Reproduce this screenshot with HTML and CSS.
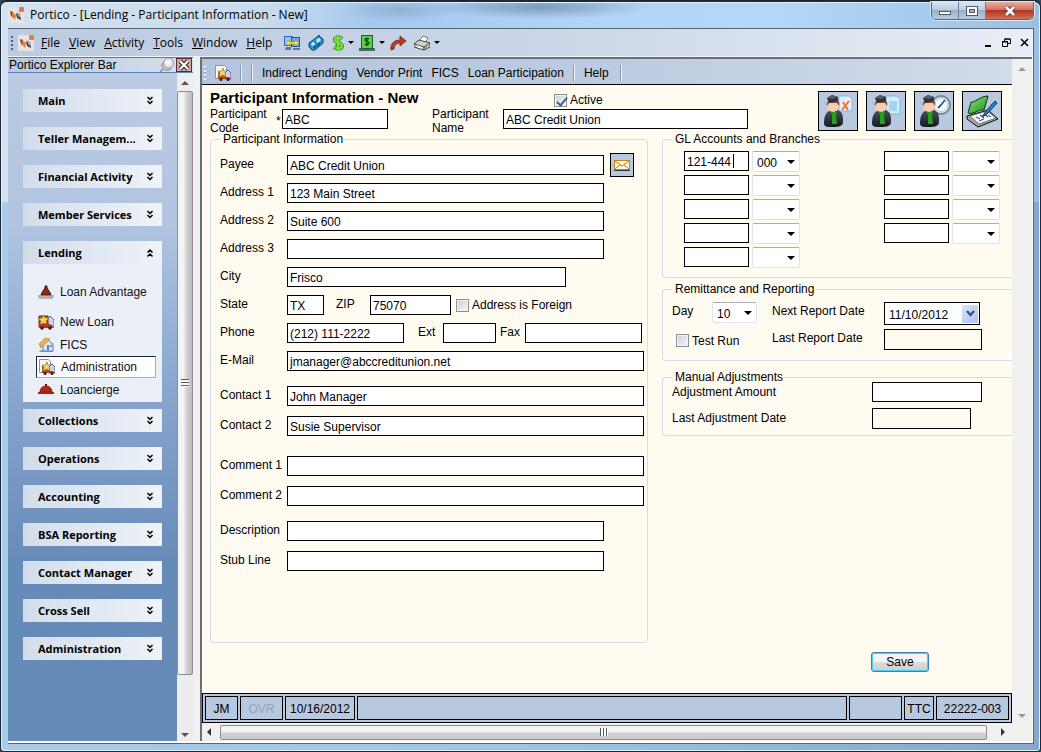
FILE: index.html
```html
<!DOCTYPE html>
<html lang="en">
<head>
<meta charset="utf-8">
<title>Portico - [Lending - Participant Information - New]</title>
<link rel="stylesheet" href="styles.css">
</head>
<body>
<svg class="defs" aria-hidden="true">
  <defs>
    <linearGradient id="suit" x1="0" y1="0" x2="0" y2="1"><stop offset="0" stop-color="#4a505c"/><stop offset="1" stop-color="#14181f"/></linearGradient>
    <linearGradient id="leaf" x1="0" y1="0" x2="1" y2="1"><stop offset="0" stop-color="#8be070"/><stop offset="1" stop-color="#1a9420"/></linearGradient>
    <symbol id="logo" viewBox="0 0 16 16">
      <rect width="16" height="16" fill="#e6e3e3"/>
      <path d="M2 4l3 1 1 6-3-2z" fill="#5a4a4c"/><path d="M4 5l4 3-1 5-3-4z" fill="#ea7a2e"/><path d="M8 6l4 2 1 5-4-2z" fill="#3c3a48"/><path d="M9 5l4 2-2 4z" fill="#b9a9a4"/>
      <rect x="11" y="0" width="5" height="5" fill="#ee8836"/><path d="M12 1l3 3M15 1l-3 3" stroke="#cf6526"/>
    </symbol>
    <symbol id="person" viewBox="0 0 36 36">
      <path d="M4 30c0-7 2-11 7-13h7c5 2 5 7 5 12 0 4-4 5-10 5S4 34 4 30z" fill="url(#suit)"/>
      <path d="M11 19h6l-1 3 1 9h-5l0-9z" fill="#25a01c"/>
      <circle cx="13" cy="13" r="6" fill="#f6cdb2"/>
      <path d="M7 13c-1-4 2-6 5-6h3c4 0 5 3 4 6l-2-3h-8z" fill="#8a4a2a"/>
      <path d="M7 5l5-3 6 2v4l-9 2z" fill="#2d323d"/><path d="M7 5l5-3 6 2-5 2z" fill="#565e6d"/>
    </symbol>
    <symbol id="house" viewBox="0 0 16 16">
      <path d="M1 15c1-3 4-3 7-2h7v2z" fill="#7fb774"/><path d="M5 7l5-4 5 4v7H5z" fill="#dbe3fa" stroke="#6478bb"/>
      <path d="M1 7l6-6 5 1-7 7-2-1v3z" fill="#e5b554" stroke="#a87926" stroke-width=".6"/><rect x="9" y="8" width="2" height="5" fill="#6577b9"/><rect x="12" y="8" width="2" height="2" fill="#5e8be0"/>
    </symbol>
    <symbol id="loan" viewBox="0 0 16 16">
      <path d="M9 5l3-3 4 4v7H9z" fill="#ccd3f4" stroke="#5a62a8"/><path d="M1 2h9v8H1z" fill="#96683a" stroke="#54351f"/>
      <path d="M6 1l1 3 4 0-3 3 1 4-3-2-4 2 1-4-3-2 4-1z" fill="#ffd453" stroke="#a86a17" stroke-width=".7"/>
      <path d="M0 11l3-1h9l3 2v2H1z" fill="#b93623"/><circle cx="4" cy="14" r="1.800" fill="#31201f"/><circle cx="12" cy="14" r="1.800" fill="#31201f"/>
    </symbol>
    <symbol id="admin" viewBox="0 0 16 16">
      <path d="M.5.500h9l2 2v11h-11z" fill="#f4f8fe" stroke="#7d97b6"/><path d="M10 8l3-3 3 3v6h-6z" fill="#ccd3f4" stroke="#5a62a8"/>
      <path d="M3 6h7v6H3z" fill="#96683a"/><path d="M8 3l1 3h3l-2 2 1 4-3-2-4 2 1-4-2-2 4 0z" fill="#ffd453" stroke="#a86a17" stroke-width=".7"/>
      <path d="M3 12h10l3 1v1H3z" fill="#b93623"/><circle cx="6" cy="14.500" r="1.500" fill="#31201f"/><circle cx="13" cy="14.500" r="1.500" fill="#31201f"/>
    </symbol>
    <symbol id="down" viewBox="0 0 8 10"><path d="M1.500 1L4 3.500 6.500 1M1.500 5L4 7.500 6.500 5" fill="none" stroke="#000" stroke-width="1.500"/></symbol>
    <symbol id="up" viewBox="0 0 8 10"><path d="M1.500 4.500L4 2l2.500 2.500M1.500 8.500L4 6l2.500 2.500" fill="none" stroke="#000" stroke-width="1.500"/></symbol>
  </defs>
</svg>

<div class="window">
  <header class="titlebar">
    <svg class="icon"><use href="#logo"/></svg>
    <span class="window-title">Portico - [Lending - Participant Information - New]</span>
    <div class="window-buttons">
      <button class="win-btn" aria-label="Minimize"><svg width="14" height="12" viewBox="0 0 14 12"><rect x="1.500" y="6.500" width="11" height="3" fill="#fff" stroke="#525968"/></svg></button>
      <button class="win-btn" aria-label="Restore"><svg width="14" height="12" viewBox="0 0 14 12"><rect x="1.500" y="1.500" width="11" height="9" fill="#fff" stroke="#525968"/><rect x="4.500" y="4.500" width="5" height="3" fill="#9fb0c4" stroke="#525968"/></svg></button>
      <button class="win-btn close" aria-label="Close"><svg width="14" height="12" viewBox="0 0 14 12"><path d="M3 2l8 8M11 2l-8 8" stroke="#5b3a42" stroke-width="4.500"/><path d="M3 2l8 8M11 2l-8 8" stroke="#fff" stroke-width="2.600"/></svg></button>
    </div>
  </header>

  <div class="client">
    <nav class="menubar">
      <span class="grip"></span>
      <svg class="icon"><use href="#logo"/></svg>
      <div class="menus">
        <button><u>F</u>ile</button><button><u>V</u>iew</button><button><u>A</u>ctivity</button><button><u>T</u>ools</button><button><u>W</u>indow</button><button><u>H</u>elp</button>
      </div>
      <div class="tools">
        <button aria-label="Network"><svg class="icon" viewBox="0 0 16 16"><rect x=".5" y="1.500" width="8" height="9" fill="#8cc4ff" stroke="#3568b0"/><rect x="7.500" y="2.500" width="8" height="9" fill="#6da5ec" stroke="#2c5594"/><path d="M2 12h5v3H1zM9 13h7v2H9z" fill="#5d74a8"/><path d="M2 8l3-3v2h6V5l4 3-4 3V9H5v2z" fill="#ffe824" stroke="#a58a00" stroke-width=".5"/></svg></button>
        <button aria-label="Calculator"><svg class="icon" viewBox="0 0 16 16"><path d="M1 8l8-6 2-2 1 2 3 2v4l-8 7H4L1 12z" fill="#2596d6" stroke="#0c3f68"/><path d="M8 5l3-2 2 2-3 3z" fill="#cbeeff"/><circle cx="5" cy="9" r="1.700" fill="#f3dfe0"/><path d="M6 13l2-2M9 11l3-3" stroke="#093b65" stroke-width="1.500"/></svg></button>
        <button class="drop" aria-label="Currency"><svg class="icon slim" viewBox="0 0 12 16"><path d="M10 4C8 2 3 2 3 5s7 3 7 6-5 3-8 1M6 0v16" fill="none" stroke="#287d17" stroke-width="4"/><path d="M10 4C8 2 3 2 3 5s7 3 7 6-5 3-8 1M6 0v16" fill="none" stroke="#79dc3c" stroke-width="2.600"/></svg></button>
        <button class="drop" aria-label="Cash"><svg class="icon" viewBox="0 0 16 16"><path d="M0 13h2l1-1h10l1 1h2v3H0z" fill="#5b6269"/><rect x="2.500" y=".5" width="11" height="13" fill="#5bce4a" stroke="#255e25"/><path d="M10 4c-1-1-4-1-4 1s4 1 4 3-3 2-4 1M8 3v8" fill="none" stroke="#0b3e10" stroke-width="1.200"/></svg></button>
        <button aria-label="Forward"><svg class="icon" viewBox="0 0 16 16"><path d="M1 15C0 8 5 5 10 5V1l6 5-6 5V8C6 8 4 11 4 14z" fill="#b93c1b" stroke="#7c210b" stroke-width=".8"/></svg></button>
        <button class="drop" aria-label="Print"><svg class="icon" viewBox="0 0 16 16"><path d="M5 6l4-5 5 2-3 5z" fill="#fff" stroke="#777"/><path d="M0 9l5-4 11 3v4l-6 3-10-3z" fill="#d0d0cd" stroke="#444"/><path d="M0 9l10 3 6-4M10 12v3" fill="none" stroke="#444"/><path d="M3 11l5 2" stroke="#fff" stroke-width="1.500"/><circle cx="12" cy="12" r="1" fill="#5ba539"/></svg></button>
      </div>
      <div class="mdi">
        <button aria-label="Minimize document"><svg width="9" height="9" viewBox="0 0 9 9"><path d="M1 7h6v2H1z"/></svg></button>
        <button aria-label="Restore document"><svg width="9" height="9" viewBox="0 0 9 9"><path d="M2.500 3V1h6v4.500H6M3 1h5" fill="none" stroke="#000"/><path d="M.5 3.500h5v5h-5zM0 4h6" fill="none" stroke="#000"/></svg></button>
        <button aria-label="Close document"><svg width="9" height="9" viewBox="0 0 9 9"><path d="M1 1l7 7M8 1L1 8" stroke="#000" stroke-width="1.600"/></svg></button>
      </div>
    </nav>

    <div class="workspace">
      <aside class="explorer">
        <div class="explorer-caption">
          <span>Portico Explorer Bar</span>
          <button aria-label="Pin"><svg class="icon" viewBox="0 0 16 16"><path d="M1 15l5-5" stroke="#888" stroke-width="1.500"/><path d="M3 7c1-1 3-1 4 0l5 4c0 2-4 3-6 2s-4-4-3-6z" fill="#c6c6c6" stroke="#8c8c8c"/><circle cx="9.500" cy="6" r="5" fill="#e8e8e8" stroke="#989898"/><circle cx="9" cy="5" r="2" fill="#fff"/></svg></button>
          <button class="explorer-close" aria-label="Close explorer"><svg width="12" height="12" viewBox="0 0 12 12"><path d="M2 2l8 8M10 2l-8 8" stroke="#222" stroke-width="4.500"/><path d="M2 2l8 8M10 2l-8 8" stroke="#fff" stroke-width="2.400"/></svg></button>
        </div>
        <div class="explorer-body">
          <div class="groups">
            <button class="group-head">Main<svg><use href="#down"/></svg></button>
            <button class="group-head">Teller Managem...<svg><use href="#down"/></svg></button>
            <button class="group-head">Financial Activity<svg><use href="#down"/></svg></button>
            <button class="group-head">Member Services<svg><use href="#down"/></svg></button>
            <section class="group-open">
              <button class="group-head">Lending<svg><use href="#up"/></svg></button>
              <a class="item first" href="#"><svg class="icon" viewBox="0 0 16 16"><path d="M3 11c1-3 2-4 4-7V2h2v2c2 3 3 4 4 7z" fill="#9c2515" stroke="#471009"/><path d="M0 12h16M1 14h14" stroke="#777"/></svg>Loan Advantage</a>
              <a class="item" href="#"><svg class="icon"><use href="#loan"/></svg>New Loan</a>
              <a class="item" href="#"><svg class="icon"><use href="#house"/></svg>FICS</a>
              <a class="item selected" href="#"><svg class="icon"><use href="#admin"/></svg>Administration</a>
              <a class="item" href="#"><svg class="icon" viewBox="0 0 16 16"><path d="M2 10c0-4 3-6 6-6s6 2 6 6z" fill="#ad2b12" stroke="#8d2210"/><path d="M0 11h16" stroke="#9c2612" stroke-width="2"/><path d="M7 2h2v2H7z" fill="#701709"/></svg>Loancierge</a>
            </section>
            <button class="group-head">Collections<svg><use href="#down"/></svg></button>
            <button class="group-head">Operations<svg><use href="#down"/></svg></button>
            <button class="group-head">Accounting<svg><use href="#down"/></svg></button>
            <button class="group-head">BSA Reporting<svg><use href="#down"/></svg></button>
            <button class="group-head">Contact Manager<svg><use href="#down"/></svg></button>
            <button class="group-head">Cross Sell<svg><use href="#down"/></svg></button>
            <button class="group-head">Administration<svg><use href="#down"/></svg></button>
          </div>
          <div class="vscroll side-scroll"><i class="arrow up"></i><div class="thumb"><i class="ridges"></i></div><i class="arrow down"></i></div>
        </div>
      </aside>

      <main class="document">
        <div class="doc-row">
          <div class="doc-column">
            <nav class="doc-toolbar">
              <span class="grip light"></span>
              <button aria-label="Lending administration"><svg class="icon"><use href="#admin"/></svg></button>
              <i class="sep"></i><i class="sep"></i>
              <button>Indirect Lending</button><button>Vendor Print</button><button>FICS</button><button>Loan Participation</button>
              <i class="sep"></i><button>Help</button><i class="sep last"></i>
            </nav>

            <form class="form">
              <header class="form-head">
                <div class="head-fields">
                  <div class="head-line">
                    <h1>Participant Information - New</h1>
                    <label class="check"><input type="checkbox" checked>Active</label>
                  </div>
                  <div class="head-line">
                    <label class="code-label" for="code">Participant Code</label>
                    <span class="required">*</span>
                    <input class="text w-code" id="code" value="ABC">
                    <label class="name-label" for="name">Participant Name</label>
                    <input class="text w-name" id="name" value="ABC Credit Union">
                  </div>
                </div>
                <div class="actions">
                  <button type="button" class="action" aria-label="Remove participant"><svg viewBox="0 0 36 36"><path d="M19 3h10l3 3v12H19z" fill="#e3eefc" stroke="#8db5e5"/><path d="M22 17l7-9M23 9l5 8" stroke="#e87a2c" stroke-width="2"/><use href="#person" width="36" height="36"/></svg></button>
                  <button type="button" class="action" aria-label="Participant document"><svg viewBox="0 0 36 36"><path d="M18 3h11l3 3v15H18z" fill="#d3ebfc" stroke="#7db9e8"/><path d="M21 8h8v10h-8z" fill="#a7d2f2"/><use href="#person" width="36" height="36"/></svg></button>
                  <button type="button" class="action" aria-label="Participant history"><svg viewBox="0 0 36 36"><circle cx="25" cy="12" r="9" fill="#d9e9f2" stroke="#788895" stroke-width="2"/><circle cx="25" cy="12" r="6.500" fill="#fafdff" stroke="#a9d0e4"/><path d="M22 15l3-3 4-5" stroke="#1d5f7c" stroke-width="1.800" fill="none"/><use href="#person" width="36" height="36"/></svg></button>
                  <button type="button" class="action" aria-label="Ledger"><svg viewBox="0 0 36 36"><path d="M3 23l21-6 10 9-20 8-11-8z" fill="#9fa69f" stroke="#111"/><path d="M6 23l17-5 9 7-17 6z" fill="#fff" stroke="#333" stroke-width=".6"/><path d="M4 20L7 9c4 1 9-6 17-6l-4 14c-6-1-10 5-16 3z" fill="url(#leaf)" stroke="#0a3310"/><path d="M12 24l4 2M16 22l4 3M20 21l4 3M15 28l5-2M24 22l3 2" stroke="#4256a4" stroke-width="1.200"/><path d="M18 24l4-6 9-10 2 2-10 11z" fill="#2c83d1" stroke="#0d2c54"/></svg></button>
                </div>
              </header>

              <div class="columns">
                <fieldset class="participant">
                  <legend>Participant Information</legend>
                  <div class="rows">
                    <div class="row"><label for="payee">Payee</label><input class="text w-medium" id="payee" value="ABC Credit Union"><button type="button" class="mail" aria-label="Mail"><svg width="16" height="12" viewBox="0 0 16 12"><rect x=".5" y="1.500" width="15" height="9" fill="#fff8e4" stroke="#c98a12"/><path d="M1 2l7 5 7-5M1 10l5-4M15 10l-5-4" fill="none" stroke="#bd7c13"/><path d="M0 11.500h16" stroke="#333"/></svg></button></div>
                    <div class="row"><label for="a1">Address 1</label><input class="text w-medium" id="a1" value="123 Main Street"></div>
                    <div class="row"><label for="a2">Address 2</label><input class="text w-medium" id="a2" value="Suite 600"></div>
                    <div class="row"><label for="a3">Address 3</label><input class="text w-medium" id="a3"></div>
                    <div class="row"><label for="city">City</label><input class="text w-city" id="city" value="Frisco"></div>
                    <div class="row"><label for="state">State</label><input class="text w-state" id="state" value="TX"><label class="zip" for="zip">ZIP</label><input class="text w-zip" id="zip" value="75070"><label class="check foreign"><input type="checkbox">Address is Foreign</label></div>
                    <div class="row"><label for="phone">Phone</label><input class="text w-phone" id="phone" value="(212) 111-2222"><label class="ext" for="ext">Ext</label><input class="text w-ext" id="ext"><label class="fax" for="fax">Fax</label><input class="text w-phone" id="fax"></div>
                    <div class="row"><label for="email">E-Mail</label><input class="text w-long" id="email" value="jmanager@abccreditunion.net"></div>
                  </div>
                  <div class="rows loose">
                    <div class="row"><label for="c1">Contact 1</label><input class="text w-long" id="c1" value="John Manager"></div>
                    <div class="row"><label for="c2">Contact 2</label><input class="text w-long" id="c2" value="Susie Supervisor"></div>
                  </div>
                  <div class="rows loose comments">
                    <div class="row"><label for="m1">Comment 1</label><input class="text w-long" id="m1"></div>
                    <div class="row"><label for="m2">Comment 2</label><input class="text w-long" id="m2"></div>
                  </div>
                  <div class="rows loose">
                    <div class="row"><label for="desc">Description</label><input class="text w-medium" id="desc"></div>
                    <div class="row"><label for="stub">Stub Line</label><input class="text w-medium" id="stub"></div>
                  </div>
                </fieldset>

                <div class="side">
                  <fieldset class="side-set">
                    <legend>GL Accounts and Branches</legend>
                    <div class="gl">
                      <div class="gl-col">
                        <div class="gl-row"><span class="caret"><input class="text w-gl" aria-label="GL account 1" value="121-444"></span><span class="select"><select aria-label="Branch 1"><option>000</option></select></span></div>
                        <div class="gl-row"><input class="text w-gl" aria-label="GL account 2"><span class="select"><select aria-label="Branch 2"><option></option></select></span></div>
                        <div class="gl-row"><input class="text w-gl" aria-label="GL account 3"><span class="select"><select aria-label="Branch 3"><option></option></select></span></div>
                        <div class="gl-row"><input class="text w-gl" aria-label="GL account 4"><span class="select"><select aria-label="Branch 4"><option></option></select></span></div>
                        <div class="gl-row"><input class="text w-gl" aria-label="GL account 5"><span class="select"><select aria-label="Branch 5"><option></option></select></span></div>
                      </div>
                      <div class="gl-col">
                        <div class="gl-row"><input class="text w-gl" aria-label="GL account 6"><span class="select"><select aria-label="Branch 6"><option></option></select></span></div>
                        <div class="gl-row"><input class="text w-gl" aria-label="GL account 7"><span class="select"><select aria-label="Branch 7"><option></option></select></span></div>
                        <div class="gl-row"><input class="text w-gl" aria-label="GL account 8"><span class="select"><select aria-label="Branch 8"><option></option></select></span></div>
                        <div class="gl-row"><input class="text w-gl" aria-label="GL account 9"><span class="select"><select aria-label="Branch 9"><option></option></select></span></div>
                      </div>
                    </div>
                  </fieldset>

                  <fieldset class="side-set">
                    <legend>Remittance and Reporting</legend>
                    <div class="report">
                      <label for="day">Day</label>
                      <span class="select day"><select id="day"><option>10</option></select></span>
                      <label for="next">Next Report Date</label>
                      <span class="date"><input id="next" value="11/10/2012"><button type="button" aria-label="Open calendar"><svg width="9" height="8" viewBox="0 0 9 8"><path d="M1 1l3.500 4L8 1" fill="none" stroke="#45536e" stroke-width="2.400"/></svg></button></span>
                      <label class="check test"><input type="checkbox">Test Run</label>
                      <label for="last">Last Report Date</label>
                      <input class="text readonly w-last" id="last" readonly>
                    </div>
                  </fieldset>

                  <fieldset class="side-set manual">
                    <legend>Manual Adjustments</legend>
                    <div class="adjust">
                      <label for="amount">Adjustment Amount</label><input class="text w-amount" id="amount">
                      <label for="adate">Last Adjustment Date</label><input class="text readonly w-adate" id="adate" readonly>
                    </div>
                  </fieldset>
                </div>
              </div>
              <footer class="form-foot"><button type="button" class="save">Save</button></footer>
            </form>

            <footer class="status">
              <span class="cell c-user">JM</span><span class="cell c-ovr">OVR</span><span class="cell c-date">10/16/2012</span><span class="cell grow"></span><span class="cell c-blank"></span><span class="cell c-ttc">TTC</span><span class="cell c-num">22222-003</span>
            </footer>
          </div>
          <div class="vscroll doc-scroll"><i class="arrow up"></i><i class="arrow down"></i></div>
        </div>
        <div class="hscroll"><i class="arrow left"></i><div class="hthumb"><i class="ridges upright"></i></div><i class="arrow right"></i></div>
      </main>
    </div>
  </div>
</div>
</body>
</html>
```
FILE: styles.css
```css
* { box-sizing: border-box; }
html, body { height: 100%; }
body { margin: 0; background: #34475c; font: 12px/14px "Liberation Sans", Arial, sans-serif; color: #000; }
button, input, select { font: inherit; color: inherit; }
button { padding: 0; border: 0; background: none; display: flex; align-items: center; }
svg { display: block; flex: none; }
.defs { position: absolute; width: 0; height: 0; }
.icon { width: 16px; height: 16px; }
.icon.slim { width: 12px; }

/* window frame */
.window {
  min-height: 100vh; display: flex; flex-direction: column; padding: 0 6px 7px 7px;
  border: 1px solid #1d2836; border-top-width: 2px; border-radius: 7px 7px 4px 4px;
  box-shadow: inset 0 0 0 1px #e3f2fd;
  background:
    radial-gradient(ellipse 60px 12px at 400px 8px, #6e8cab66, transparent),
    radial-gradient(ellipse 110px 12px at 540px 5px, #59779899, transparent),
    linear-gradient(90deg, #d3e1f0 0, #c9dced 260px, #a5c9ee 370px, #b3d5f8 620px, #b4d6f7 780px, #a9cdf0 900px, #9bbfe0 100%) 0 0 / 100% 200px no-repeat,
    linear-gradient(90deg, #a8ccec, #9cc4ea 50%, #84a9cc);
}
.titlebar { height: 26px; display: flex; align-items: center; gap: 6px; }
.window-title { flex: 1; font: 12px/18px "Open Sans", "Noto Sans", sans-serif; }
.window-buttons { align-self: flex-start; display: flex; border: 1px solid #566679; border-top: 0; border-radius: 0 0 5px 5px; overflow: hidden; box-shadow: 0 0 0 1px #d8eafa; }
.win-btn { width: 27px; height: 17px; justify-content: center; border-right: 1px solid #6d8098; background: linear-gradient(#d9e7f5, #bacee2 45%, #97afc9 50%, #b5cce2); }
.win-btn.close { width: 47px; border: 0; background: linear-gradient(#e9ada0, #d27564 45%, #b53424 50%, #cf7258); }

.client { flex: 1; display: flex; flex-direction: column; border: 1px solid #576677; border-left: 0; background: #f0f0f0; }

/* menu bar */
.menubar { display: flex; align-items: center; height: 28px; padding: 0 4px 0 3px; background: linear-gradient(90deg, #bccbe1, #c9d5e7 50%, #e9eef6); border-bottom: 1px solid #eef3f9; font: 12px/16px "Open Sans", "Noto Sans", sans-serif; }
.grip { width: 2px; height: 14px; margin-right: 5px; background: repeating-linear-gradient(#4d5f7b 0 2px, transparent 2px 4px); }
.menus { display: flex; gap: 9px; margin-left: 7px; }
.tools { display: flex; gap: 8px; margin-left: 12px; }
.drop::after, .select::after { content: ""; border: 3px solid transparent; border-top: 3px solid #000; border-bottom: 0; }
.drop::after { margin-left: 4px; }
.drop + .drop, .drop + button { margin-left: -3px; }
.mdi { display: flex; gap: 9px; margin-left: auto; }

.workspace { flex: 1; display: flex; gap: 7px; min-height: 0; border-right: 1px solid #fff; border-bottom: 2px solid #fff; }

/* explorer bar */
.explorer { width: 185px; flex: none; display: flex; flex-direction: column; }
.explorer-caption { display: flex; align-items: center; height: 16px; padding-left: 1px; border: 1px solid #64799b; border-width: 1px 0; border-bottom-color: #5e86b6; background: linear-gradient(90deg, #b8c8df, #d7e0ee); }
.explorer-caption span { flex: 1; }
.explorer-close { width: 16px; height: 14px; justify-content: center; border: 1px solid #57292e; background: #d5a8a8; margin: 0 1px; }
.explorer-body { flex: 1; display: flex; min-height: 0; background: linear-gradient(#bccbe3 0, #b1c4e0 150px, #9cb6d9 230px, #84a1cb 345px, #678bb8 490px, #668ab7 100%); }
.groups { flex: 1; display: flex; flex-direction: column; gap: 15px; padding: 16px 15px; }
.group-head { width: 100%; height: 23px; flex: none; justify-content: space-between; padding: 0 8px 0 15px; background: linear-gradient(90deg, #d3ddea, #eff3f9); font: bold 11px/14px "Open Sans", "Noto Sans", sans-serif; text-align: left; }
.group-head svg { width: 8px; height: 10px; }
.group-open { background: #ebf0f8; display: flex; flex-direction: column; padding-bottom: 1px; margin-bottom: -8px; }
.item { display: flex; align-items: center; gap: 6px; height: 23px; margin: 0 6px 0 13px; padding-left: 2px; color: #111; text-decoration: none; }
.item.first { margin-top: 16px; margin-bottom: 7px; }
.item.selected { background: #fff; border: 1px solid #9dafca; border-top-color: #1d2534; border-left-color: #1d2534; height: 22px; }

/* scroll bars */
.vscroll { display: flex; flex-direction: column; align-items: center; background: #f0f0f0; }
.side-scroll { width: 16px; flex: none; gap: 6px; padding: 8px 0 4px; background: #ededee; }
.thumb { flex: 1; width: 16px; margin-bottom: 52px; display: flex; align-items: center; justify-content: center; border: 1px solid #8e8f92; border-radius: 2px; background: linear-gradient(90deg, #f4f4f4 40%, #d3d3d6 60%, #bdbdc0); }
.ridges { width: 8px; height: 8px; background: repeating-linear-gradient(#55575c 0 1px, #fff 1px 3px); }
.ridges.upright { background: repeating-linear-gradient(90deg, #55575c 0 1px, #fff 1px 3px); }
.arrow { border: 4px solid transparent; }
.arrow.up { border-top: 0; border-bottom-color: #555; }
.arrow.down { border-bottom: 0; border-top-color: #555; }
.arrow.left { border-left: 0; border-right-color: #333; }
.arrow.right { border-right: 0; border-left-color: #333; }
.doc-scroll { width: 20px; flex: none; justify-content: space-between; padding: 8px 0 5px; }
.doc-scroll .arrow.up { border-bottom-color: #999; }
.doc-scroll .arrow.down { border-top-color: #999; }
.hscroll { height: 18px; display: flex; align-items: center; gap: 9px; padding: 0 27px 0 5px; background: #f0f0f0; }
.hthumb { flex: 1; height: 15px; display: flex; align-items: center; justify-content: center; border: 1px solid #8e8f92; border-radius: 2px; background: linear-gradient(#f4f4f4 40%, #d3d3d6 55%, #c8c8cb); }
.hscroll .arrow.right { margin-left: 5px; }

/* document */
.document { flex: 1; min-width: 0; display: flex; flex-direction: column; border: 2px solid #6b6f76; border-width: 2px 0 0 2px; }
.doc-row { flex: 1; display: flex; }
.doc-column { flex: 1; min-width: 0; display: flex; flex-direction: column; }
.doc-toolbar { height: 26px; flex: none; display: flex; align-items: center; gap: 9px; padding: 2px 2px 0; border-bottom: 1px solid #000; background: linear-gradient(90deg, #b5c5dd, #bccbe1 50%, #d2dcea); }
.grip.light { margin-right: 0; background: repeating-linear-gradient(#eef3fa 0 2px, #8fa2be 2px 3px, transparent 3px 4px); }
.sep { width: 2px; height: 16px; border-left: 1px solid #8598b5; border-right: 1px solid #f3f7fc; }
.sep.last { margin-left: 2px; }

.form { flex: 1; display: flex; flex-direction: column; background: #fffbf0; }
.form-head { display: flex; justify-content: space-between; height: 49px; padding: 5px 10px 0 8px; }
.head-line { display: flex; align-items: flex-start; }
h1 { width: 344px; margin: 0; font: bold 15px/16px "Liberation Sans", Arial, sans-serif; }
.check { display: flex; align-items: center; gap: 3px; white-space: nowrap; }
.check input { appearance: none; width: 13px; height: 13px; margin: 0; flex: none; border: 1px solid #8e8f8f; background: linear-gradient(135deg, #c9ced6, #f8f8f8); box-shadow: inset 0 0 0 1px #f4f4f4; position: relative; }
.check input:checked::after { content: ""; position: absolute; left: 4px; top: 0; width: 4px; height: 9px; border: solid #4a5f97; border-width: 0 2px 2px 0; transform: rotate(40deg); }
.head-line .check { padding-top: 3px; }
.code-label { width: 66px; }
.name-label { width: 71px; margin-left: 44px; padding-right: 5px; }
.required { width: 6px; padding-top: 7px; }
.head-line .text { margin-top: 2px; }
.actions { display: flex; gap: 8px; padding-top: 1px; }
.action { width: 40px; height: 40px; border: 1px solid #000; background: #b8c8df; justify-content: center; }
.action svg { width: 36px; height: 36px; }

.text { height: 20px; min-width: 0; margin: 0; padding: 2px 2px 0; border: 1px solid #000; border-radius: 0; background: #fff; }
.text.readonly { height: 21px; background: #fffbf0; }
.w-code { width: 106px; } .w-name { width: 245px; } .w-medium { width: 317px; } .w-city { width: 279px; }
.w-state { width: 37px; } .w-zip { width: 81px; } .w-phone { width: 117px; } .w-ext { width: 53px; }
.w-long { width: 357px; } .w-gl { width: 65px; } .w-last { width: 98px; } .w-amount { width: 110px; } .w-adate { width: 99px; }

.columns { flex: 1; display: grid; grid-template-columns: 438fr 350fr; column-gap: 14px; padding-left: 8px; }
fieldset { min-width: 0; margin: 0; padding: 0 3px 0 9px; border: 1px solid #d3dcec; border-radius: 4px; }
legend { padding: 0 1px 0 3px; line-height: 10px; }
.rows { display: flex; flex-direction: column; gap: 8px; padding-top: 11px; }
.rows.loose { gap: 10px; padding-top: 15px; }
.rows.comments { padding-top: 20px; }
.row { display: flex; align-items: center; height: 20px; }
.row > label:first-child { width: 67px; flex: none; white-space: nowrap; }
.row > label:not(.check) { padding-bottom: 2px; }
.row .text { flex-shrink: 1; }
.mail { width: 24px; height: 24px; margin-left: 6px; flex: none; justify-content: center; border: 1px solid #000; background: #b8c8df; }
.zip { margin-left: 12px; width: 34px; }
.foreign { margin-left: 5px; }
.ext { margin-left: 14px; width: 25px; }
.fax { margin-left: 4px; width: 25px; }

.side { display: flex; flex-direction: column; gap: 6px; }
.side-set { border-right: 0; border-radius: 4px 0 0 4px; }
.gl { display: grid; grid-template-columns: 200px auto; justify-content: start; padding: 7px 0 9px 12px; }
.gl-col { display: flex; flex-direction: column; gap: 3px; }
.gl-row { display: flex; align-items: flex-start; gap: 3px; }
.caret { position: relative; display: flex; }
.caret::after { content: ""; position: absolute; left: 49px; top: 3px; width: 1px; height: 14px; background: #000; }
.select { position: relative; display: flex; width: 48px; height: 21px; }
.select select { appearance: none; width: 100%; padding: 3px 4px 0; border: 1px solid #dfe3ec; border-top-color: #abadb3; border-radius: 2px; background: #fff; }
.select::after { position: absolute; right: 5px; top: 9px; border-width: 4px 4px 0; }
.report { display: grid; grid-template-columns: 40px 60px 112px auto; justify-content: start; row-gap: 4px; padding: 8px 0 10px; }
.report > label { padding-top: 2px; }
.select.day { width: 45px; }
.report .test { grid-column: span 2; padding-left: 4px; }
.date { display: flex; align-items: center; width: 96px; height: 23px; padding: 1px; border: 1px solid #000; background: #fff; }
.date input { flex: 1; min-width: 0; padding: 2px 0 0 3px; border: 0; background: none; }
.date button { width: 16px; height: 18px; flex: none; justify-content: center; background: linear-gradient(135deg, #d5e2fc, #adc4f5); }
.manual { margin-top: 5px; }
.adjust { display: grid; grid-template-columns: 200px auto; justify-content: start; row-gap: 6px; padding: 0 0 6px; }
.adjust label { padding-top: 3px; }
.form-foot { display: flex; justify-content: flex-end; padding: 9px 83px 21px 8px; }
.save { width: 58px; height: 20px; justify-content: center; border: 1px solid #3c7fb1; border-radius: 3px; box-shadow: inset 0 0 0 1px #48d1f5; background: linear-gradient(#f4f4f4 50%, #dcdcdc 50%, #cfcfcf); }

.status { display: flex; gap: 2px; height: 30px; padding: 2px; border: 1px solid #000; background: #b8c8df; }
.cell { height: 24px; display: flex; align-items: center; justify-content: center; border: 1px solid #000; padding-top: 2px; }
.grow { flex: 1; } .c-user { width: 33px; } .c-ovr { width: 43px; color: #97a3b5; } .c-date { width: 70px; }
.c-blank { width: 53px; } .c-ttc { width: 30px; } .c-num { width: 73px; }
```
